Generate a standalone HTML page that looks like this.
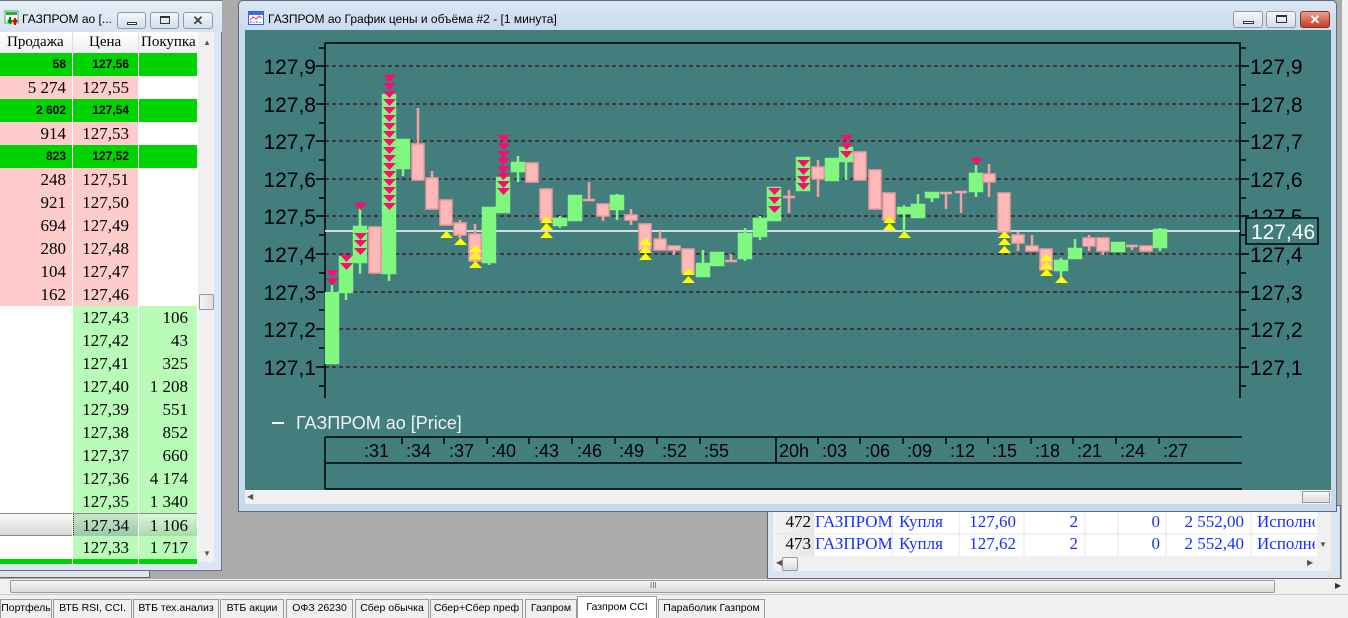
<!DOCTYPE html>
<html><head><meta charset="utf-8">
<style>
*{margin:0;padding:0;box-sizing:border-box}
body{width:1348px;height:618px;overflow:hidden;background:#ababab;position:relative;font-family:"Liberation Sans",sans-serif}
.a{position:absolute}
.btn{position:absolute;height:17px;border:1px solid #8d99a8;border-radius:3px;background:linear-gradient(#f4f7fb,#d5dde8)}
.ob{position:absolute;left:0;top:0;width:222px;height:571px;background:#dbe6f2;border:1px solid #6a7380;border-left:none}
.row{position:absolute;left:0;width:197px;height:23px;font-family:"Liberation Serif",serif;font-size:17px;line-height:23px}
.row div{position:absolute;top:0;height:23px;text-align:right;line-height:23px}
.c1{left:0;width:72px;padding-right:6px}
.c2{left:73px;width:65px;padding-right:9px}
.c3{left:139px;width:58px;padding-right:9px}
.row .gb{background:#00d400;font-family:"Liberation Sans",sans-serif;font-weight:bold;font-size:12px;line-height:23px}
.pk{background:#ffcccc}
.lg{background:#b8fcb8}
.tab{position:absolute;top:599px;height:19px;border:1px solid #9a9a9a;border-bottom:none;background:#f0f0f0;font-size:10.5px;line-height:17px;text-align:center;color:#000;white-space:nowrap;overflow:hidden}
.t{position:absolute;font-family:"Liberation Serif",serif;font-size:17px;color:#1530ff;line-height:22px}
</style></head><body>

<div class="ob">
 <div class="a" style="left:0;top:0;width:222px;height:31px;background:linear-gradient(#e6eef7,#d6e2ef)"></div>
 <svg class="a" style="left:4px;top:9px" width="16" height="16"><rect x="1" y="1" width="13" height="12" fill="#fff" stroke="#4a7"/><rect x="2" y="2" width="11" height="3" fill="#3a3"/><path d="M6 7v6M4 10l2 3 2-3" stroke="#080" stroke-width="2" fill="none"/><path d="M11 15V9M9 12l2-3 2 3" stroke="#e00" stroke-width="2" fill="none"/></svg>
 <div class="a" style="left:22px;top:11px;font-size:12px;color:#000">ГАЗПРОМ ао [...</div>
 <div class="btn" style="left:117px;top:11px;width:29px"><div class="a" style="left:9px;top:9px;width:10px;height:3px;border:1px solid #333;background:#fff"></div></div>
 <div class="btn" style="left:150px;top:11px;width:29px"><div class="a" style="left:9px;top:3px;width:10px;height:8px;border:1px solid #333;border-top-width:2px"></div></div>
 <div class="btn" style="left:183px;top:11px;width:30px;text-align:center;font-size:13px;line-height:15px;color:#444;font-weight:bold">✕</div>
 <div class="a" style="left:0;top:31px;width:214px;height:530px;background:#fff"></div>
 <div class="a" style="left:0;top:31px;width:197px;height:21px;background:linear-gradient(#fff,#eef0f3);font-family:'Liberation Serif',serif;font-size:15px;line-height:21px">
  <span class="a" style="left:7px">Продажа</span><span class="a" style="left:89px">Цена</span><span class="a" style="left:141px">Покупка</span>
  <div class="a" style="left:72px;top:0;width:1px;height:21px;background:#dde"></div><div class="a" style="left:138px;top:0;width:1px;height:21px;background:#dde"></div>
 </div>
 <div class="a" style="left:198px;top:31px;width:16px;height:530px;background:#f0f0f0"></div>
 <div class="a" style="left:203px;top:37px;font-size:8px;color:#555">▲</div>
 <div class="a" style="left:199px;top:293px;width:15px;height:16px;border:1px solid #999;border-radius:2px;background:linear-gradient(90deg,#f4f4f4,#ddd)"></div>
 <div class="a" style="left:203px;top:548px;font-size:8px;color:#555">▼</div>

 <div class="row" style="top:52px"><div class="c1 gb">58</div><div class="c2 gb">127,56</div><div class="c3 gb"></div></div>
 <div class="row" style="top:75px"><div class="c1 pk">5 274</div><div class="c2 pk">127,55</div></div>
 <div class="row" style="top:98px"><div class="c1 gb">2 602</div><div class="c2 gb">127,54</div><div class="c3 gb"></div></div>
 <div class="row" style="top:121px"><div class="c1 pk">914</div><div class="c2 pk">127,53</div></div>
 <div class="row" style="top:144px"><div class="c1 gb">823</div><div class="c2 gb">127,52</div><div class="c3 gb"></div></div>
 <div class="row" style="top:167px"><div class="c1 pk">248</div><div class="c2 pk">127,51</div></div>
 <div class="row" style="top:190px"><div class="c1 pk">921</div><div class="c2 pk">127,50</div></div>
 <div class="row" style="top:213px"><div class="c1 pk">694</div><div class="c2 pk">127,49</div></div>
 <div class="row" style="top:236px"><div class="c1 pk">280</div><div class="c2 pk">127,48</div></div>
 <div class="row" style="top:259px"><div class="c1 pk">104</div><div class="c2 pk">127,47</div></div>
 <div class="row" style="top:282px"><div class="c1 pk">162</div><div class="c2 pk">127,46</div></div>
 <div class="row" style="top:305px"><div class="c2 lg">127,43</div><div class="c3 lg">106</div></div>
 <div class="row" style="top:328px"><div class="c2 lg">127,42</div><div class="c3 lg">43</div></div>
 <div class="row" style="top:351px"><div class="c2 lg">127,41</div><div class="c3 lg">325</div></div>
 <div class="row" style="top:374px"><div class="c2 lg">127,40</div><div class="c3 lg">1 208</div></div>
 <div class="row" style="top:397px"><div class="c2 lg">127,39</div><div class="c3 lg">551</div></div>
 <div class="row" style="top:420px"><div class="c2 lg">127,38</div><div class="c3 lg">852</div></div>
 <div class="row" style="top:443px"><div class="c2 lg">127,37</div><div class="c3 lg">660</div></div>
 <div class="row" style="top:466px"><div class="c2 lg">127,36</div><div class="c3 lg">4 174</div></div>
 <div class="row" style="top:489px"><div class="c2 lg">127,35</div><div class="c3 lg">1 340</div></div>
 <div class="row" style="top:512px;border-top:1px solid #888;border-bottom:1px solid #888;background:linear-gradient(#fafafa,#d8d8d8)"><div class="c2" style="background:linear-gradient(#c8e8c8,#98c8a8);border-left:1px dotted #333">127,34</div><div class="c3" style="background:linear-gradient(#d8f8d8,#a8d8a8)">1 106</div></div>
 <div class="row" style="top:535px"><div class="c2 lg">127,33</div><div class="c3 lg">1 717</div></div>
 <div class="a" style="left:0;top:558px;width:197px;height:5px;background:#00d400"></div>
 <div class="a" style="left:72px;top:52px;width:1px;height:511px;background:#fff"></div>
 <div class="a" style="left:138px;top:52px;width:1px;height:511px;background:#fff"></div>
</div>
<div class="a" style="left:0;top:571px;width:150px;height:7px;background:#dde4ec;border-right:1px solid #666;border-bottom:1px solid #666"></div>

<div class="a" style="left:767px;top:505px;width:574px;height:74px;background:#d9e5f2;border:1px solid #666"></div>
<div class="a" style="left:773px;top:512px;width:544px;height:44px;background:#fff"></div>
<div class="a" style="left:773px;top:512px;width:41px;height:44px;background:linear-gradient(90deg,#f4f4f4,#e6e6e6)"></div>
<div class="a" style="left:1317px;top:512px;width:14px;height:59px;background:#f0f0f0"></div>
<div class="a" style="left:773px;top:556px;width:544px;height:15px;background:#f0f0f0"></div>
<div class="a" style="left:782px;top:557px;width:16px;height:14px;border:1px solid #999;border-radius:2px;background:linear-gradient(#f8f8f8,#ddd)"></div>
<div class="a" style="left:1319px;top:540px;font-size:8px;color:#555">▼</div>
<div class="a" style="left:776px;top:558px;font-size:8px;color:#555">◀</div>
<div class="a" style="left:1307px;top:558px;font-size:8px;color:#555">▶</div>
<svg class="a" style="left:773px;top:512px" width="544" height="44"><g stroke="#e4e4e4"><path d="M41 0v44M119 0v44M186 0v44M251 0v44M312 0v44M345 0v44M393 0v44M478 0v44M0 22h544"/></g></svg>
<div class="t" style="left:773px;top:511px;width:38px;text-align:right;color:#000">472</div>
<div class="t" style="left:773px;top:533px;width:38px;text-align:right;color:#000">473</div>
<div class="t" style="left:815px;top:511px">ГАЗПРОМ</div><div class="t" style="left:815px;top:533px">ГАЗПРОМ</div>
<div class="t" style="left:899px;top:511px">Купля</div><div class="t" style="left:899px;top:533px">Купля</div>
<div class="t" style="left:960px;top:511px;width:56px;text-align:right">127,60</div><div class="t" style="left:960px;top:533px;width:56px;text-align:right">127,62</div>
<div class="t" style="left:1060px;top:511px;width:18px;text-align:right">2</div><div class="t" style="left:1060px;top:533px;width:18px;text-align:right">2</div>
<div class="t" style="left:1140px;top:511px;width:20px;text-align:right">0</div><div class="t" style="left:1140px;top:533px;width:20px;text-align:right">0</div>
<div class="t" style="left:1166px;top:511px;width:78px;text-align:right">2 552,00</div><div class="t" style="left:1166px;top:533px;width:78px;text-align:right">2 552,40</div>
<div class="t" style="left:1257px;top:511px;width:58px;overflow:hidden;white-space:nowrap">Исполнено</div><div class="t" style="left:1257px;top:533px;width:58px;overflow:hidden;white-space:nowrap">Исполнено</div>
<div class="a" style="left:1341px;top:0;width:7px;height:579px;background:#f0f0f0;border-left:1px solid #aaa"></div>

<div class="a" style="left:238px;top:0;width:1099px;height:512px;background:#c7daee;border:1px solid #5a6a7c;border-radius:5px 5px 0 0"></div>
<div class="a" style="left:239px;top:1px;width:1097px;height:29px;background:linear-gradient(#dbe7f4,#c9dbee);border-radius:5px 5px 0 0"></div>
<svg class="a" style="left:248px;top:11px" width="16" height="14"><rect x=".5" y=".5" width="15" height="13" fill="#fff" stroke="#3366cc"/><rect x="1" y="1" width="14" height="3" fill="#3a6fd8"/><path d="M2 9l3-3 3 2 3-3 3 2" stroke="#e33" fill="none"/><path d="M3 12v-2M6 12v-1M9 12v-2M12 12v-1" stroke="#36c"/></svg>
<div class="a" style="left:268px;top:12px;font-size:12px;color:#000">ГАЗПРОМ ао График цены и объёма #2 - [1 минута]</div>
<div class="btn" style="left:1233px;top:11px;width:30px"><div class="a" style="left:9px;top:9px;width:11px;height:3px;border:1px solid #333;background:#fff"></div></div>
<div class="btn" style="left:1266px;top:11px;width:30px"><div class="a" style="left:9px;top:3px;width:11px;height:8px;border:1px solid #333;border-top-width:2px"></div></div>
<div class="btn" style="left:1300px;top:11px;width:30px;background:linear-gradient(#e8a090,#c43c28);border-color:#8a3020;text-align:center;color:#fff;font-weight:bold;font-size:13px;line-height:15px">✕</div>
<div class="a" style="left:245px;top:30px;width:1086px;height:460px;background:#427e7e"></div>
<div class="a" style="left:245px;top:490px;width:1086px;height:14px;background:#f0f0f0"></div>
<div class="a" style="left:247px;top:492px;font-size:8px;color:#555">◀</div>
<div class="a" style="left:1302px;top:491px;width:28px;height:12px;border:1px solid #999;background:linear-gradient(#f6f6f6,#ddd)"></div>

<svg class="a" style="left:0;top:0" width="1348" height="618" font-family="Liberation Sans, sans-serif">
 <g stroke="#4a0808" stroke-width="1.3" stroke-dasharray="4 3">
  <path d="M325 66H1240M325 104H1240M325 141H1240M325 179H1240M325 216H1240M325 254H1240M325 292H1240M325 329H1240M325 367H1240"/>
 </g>
 <g stroke="#000" stroke-width="1.5" fill="none">
  <path d="M325 43H1240V398M325 43V398M316 66h9M316 104h9M316 141h9M316 179h9M316 216h9M316 254h9M316 292h9M316 329h9M316 367h9M319 48h6M319 85h6M319 123h6M319 160h6M319 198h6M319 235h6M319 273h6M319 310h6M319 348h6M319 386h6M1240 66h9M1240 104h9M1240 141h9M1240 179h9M1240 216h9M1240 254h9M1240 292h9M1240 329h9M1240 367h9M1240 48h6M1240 85h6M1240 123h6M1240 160h6M1240 198h6M1240 235h6M1240 273h6M1240 310h6M1240 348h6M1240 386h6"/>
  <path d="M325 437H1242M325 463H1242M325 489H1242M325 437V489M776 437V463"/>
  <path d="M402 437v7M444 437v7M487 437v7M529 437v7M572 437v7M615 437v7M657 437v7M700 437v7M818 437v7M860 437v7M903 437v7M946 437v7M988 437v7M1031 437v7M1073 437v7M1116 437v7M1159 437v7"/>
 </g>
 <g font-size="21" fill="#000" text-anchor="end">
  <text x="316" y="74">127,9</text><text x="316" y="112">127,8</text><text x="316" y="149">127,7</text><text x="316" y="187">127,6</text><text x="316" y="224">127,5</text><text x="316" y="262">127,4</text><text x="316" y="300">127,3</text><text x="316" y="337">127,2</text><text x="316" y="375">127,1</text>
 </g>
 <g font-size="21" fill="#000">
  <text x="1250" y="74">127,9</text><text x="1250" y="112">127,8</text><text x="1250" y="149">127,7</text><text x="1250" y="187">127,6</text><text x="1250" y="224">127,5</text><text x="1250" y="262">127,4</text><text x="1250" y="300">127,3</text><text x="1250" y="337">127,2</text><text x="1250" y="375">127,1</text>
 </g>
 <line x1="325" y1="231" x2="1240" y2="231" stroke="#fff" stroke-width="1.5"/>
 <rect x="1246" y="218" width="72" height="26" fill="#427e7e" stroke="#000" stroke-width="1.5"/>
 <text x="1251" y="239" font-size="21" fill="#fff">127,46</text>

 <g stroke="#80f880" stroke-width="2.5" fill="#80f880">
  <path d="M332 285V363M346 255V300M360 203V274M389 95V281M403 140V176M489 208V265M503 178V212M518 156V182M560 216V228M575 196V220M617 194V220M703 250V276M717 253V265M745 228V261M760 216V240M774 188V220M803 158V190M832 159V180M846 148V180M904 205V237M918 194V217M932 193V202M976 165V197M1061 258V280M1075 239V258M1118 243V251M1160 228V251" fill="none"/>
  <rect x="326" y="293" width="12" height="70"/><rect x="340" y="257" width="12" height="35"/><rect x="354" y="227" width="12" height="35"/><rect x="383" y="95" width="12" height="178"/><rect x="397" y="140" width="12" height="28"/><rect x="483" y="208" width="12" height="54"/><rect x="497" y="178" width="12" height="34"/><rect x="512" y="163" width="12" height="8"/><rect x="554" y="219" width="12" height="6"/><rect x="569" y="196" width="12" height="24"/><rect x="611" y="196" width="12" height="13"/><rect x="697" y="264" width="12" height="12"/><rect x="711" y="253" width="12" height="12"/><rect x="739" y="234" width="12" height="24"/><rect x="754" y="219" width="12" height="17"/><rect x="768" y="188" width="12" height="32"/><rect x="797" y="158" width="12" height="32"/><rect x="826" y="159" width="12" height="21"/><rect x="840" y="148" width="12" height="13"/><rect x="898" y="208" width="12" height="5"/><rect x="912" y="205" width="12" height="12"/><rect x="926" y="193" width="12" height="4"/><rect x="970" y="174" width="12" height="17"/><rect x="1055" y="261" width="12" height="9"/><rect x="1069" y="249" width="12" height="9"/><rect x="1112" y="243" width="12" height="8"/><rect x="1154" y="230" width="12" height="17"/>
 </g>
 <g stroke="#f2a0a0" stroke-width="2.5" fill="none">
  <path d="M418 108V180M432 171V209M460 220V238M475 224V265M589 182V200M603 204V221M631 209V225M660 231V250M674 246V255M731 254V261M789 190V213M818 160V197M946 193V209M961 191V213M989 164V197M1018 232V251M1032 235V251M1089 235V251M1103 238V255M1132 246V250"/>
  <path d="M583 200h12M725 261h12M783 197h12M940 193h12M955 192h12M1126 246h12"/>
 </g>
 <g fill="#ffb8b8" stroke="#f29a9a" stroke-width="1.5">
  <rect x="369" y="227" width="12" height="46"/><rect x="412" y="144" width="12" height="36"/><rect x="426" y="178" width="12" height="31"/><rect x="440" y="200" width="12" height="25"/><rect x="454" y="223" width="12" height="12"/><rect x="469" y="234" width="12" height="27"/><rect x="526" y="163" width="12" height="19"/><rect x="540" y="189" width="12" height="31"/><rect x="597" y="204" width="12" height="12"/><rect x="625" y="215" width="12" height="5"/><rect x="639" y="224" width="12" height="26"/><rect x="654" y="239" width="12" height="11"/><rect x="668" y="246" width="12" height="4"/><rect x="682" y="249" width="12" height="24"/><rect x="812" y="167" width="12" height="12"/><rect x="854" y="152" width="12" height="28"/><rect x="869" y="170" width="12" height="39"/><rect x="883" y="193" width="12" height="27"/><rect x="983" y="174" width="12" height="8"/><rect x="998" y="193" width="12" height="39"/><rect x="1012" y="235" width="12" height="8"/><rect x="1026" y="246" width="12" height="5"/><rect x="1040" y="249" width="12" height="21"/><rect x="1083" y="238" width="12" height="8"/><rect x="1097" y="238" width="12" height="13"/><rect x="1140" y="246" width="12" height="5"/>
 </g>
 <g fill="#ff0a6e">
  <path d="M326 270h13l-6.5 7zM326 278h13l-6.5 7zM340 255h13l-6.5 7zM340 263h13l-6.5 7zM354 203h13l-6.5 7zM354 233h13l-6.5 7zM354 240h13l-6.5 7zM354 248h13l-6.5 7z"/>
  <path d="M383 75h13l-6.5 7zM383 83h13l-6.5 7zM383 91h13l-6.5 7zM383 99h13l-6.5 7zM383 107h13l-6.5 7zM383 115h13l-6.5 7zM383 123h13l-6.5 7zM383 131h13l-6.5 7zM383 139h13l-6.5 7zM383 147h13l-6.5 7zM383 155h13l-6.5 7zM383 163h13l-6.5 7zM383 171h13l-6.5 7zM383 179h13l-6.5 7zM383 187h13l-6.5 7zM383 195h13l-6.5 7zM383 203h13l-6.5 7z"/>
  <path d="M497 135h13l-6.5 7zM497 143h13l-6.5 7zM497 151h13l-6.5 7zM497 158h13l-6.5 7zM497 166h13l-6.5 7zM497 173h13l-6.5 7zM497 181h13l-6.5 7zM497 188h13l-6.5 7z"/>
  <path d="M768 188h13l-6.5 7zM768 197h13l-6.5 7zM768 206h13l-6.5 7zM797 160h13l-6.5 7zM797 168h13l-6.5 7zM797 176h13l-6.5 7zM797 183h13l-6.5 7zM840 135h13l-6.5 7zM840 143h13l-6.5 7zM840 151h13l-6.5 7zM970 158h13l-6.5 7z"/>
 </g>
 <g fill="#ffff00">
  <path d="M440 238h13l-6.5-7zM454 245h13l-6.5-7zM469 252h13l-6.5-7zM469 259h13l-6.5-7zM469 268h13l-6.5-7zM540 223h13l-6.5-7zM540 230h13l-6.5-7zM540 238h13l-6.5-7zM639 245h13l-6.5-7zM639 253h13l-6.5-7zM639 260h13l-6.5-7zM682 275h13l-6.5-7zM682 283h13l-6.5-7zM883 223h13l-6.5-7zM883 230h13l-6.5-7zM898 238h13l-6.5-7zM998 238h13l-6.5-7zM998 245h13l-6.5-7zM998 253h13l-6.5-7zM1040 261h13l-6.5-7zM1040 269h13l-6.5-7zM1040 276h13l-6.5-7zM1055 283h13l-6.5-7z"/>
 </g>
 <path d="M272 423h12" stroke="#fff" stroke-width="2"/>
 <text x="296" y="429" font-size="18" fill="#f2f2f2">ГАЗПРОМ ао [Price]</text>
 <g font-size="18" fill="#000">
  <text x="364" y="457">:31</text><text x="406" y="457">:34</text><text x="449" y="457">:37</text><text x="491" y="457">:40</text><text x="534" y="457">:43</text><text x="577" y="457">:46</text><text x="619" y="457">:49</text><text x="662" y="457">:52</text><text x="704" y="457">:55</text>
  <text x="779" y="457">20h</text><text x="822" y="457">:03</text><text x="865" y="457">:06</text><text x="907" y="457">:09</text><text x="950" y="457">:12</text><text x="992" y="457">:15</text><text x="1035" y="457">:18</text><text x="1077" y="457">:21</text><text x="1120" y="457">:24</text><text x="1163" y="457">:27</text>
 </g>
</svg>

<div class="a" style="left:0;top:579px;width:1348px;height:15px;background:#f0f0f0"></div>
<div class="a" style="left:10px;top:580px;width:1265px;height:13px;border:1px solid #9a9a9a;border-radius:2px;background:linear-gradient(#f6f6f6,#d8d8d8)"></div>
<div class="a" style="left:650px;top:581px;font-size:8px;color:#666">III</div>
<div class="a" style="left:1335px;top:581px;font-size:8px;color:#333">▶</div>
<div class="a" style="left:0;top:594px;width:1348px;height:24px;background:#f0f0f0;border-top:1px solid #ccc"></div>
<div class="tab" style="left:0;width:52px">Портфель</div>
<div class="tab" style="left:53px;width:79px">ВТБ RSI, CCI.</div>
<div class="tab" style="left:133px;width:86px">ВТБ тех.анализ</div>
<div class="tab" style="left:220px;width:64px">ВТБ акции</div>
<div class="tab" style="left:286px;width:67px">ОФЗ 26230</div>
<div class="tab" style="left:355px;width:74px">Сбер обычка</div>
<div class="tab" style="left:430px;width:93px">Сбер+Сбер преф</div>
<div class="tab" style="left:525px;width:52px">Газпром</div>
<div class="tab" style="left:577px;top:596px;height:22px;width:80px;background:#fff;line-height:20px">Газпром CCI</div>
<div class="tab" style="left:658px;width:107px">Параболик Газпром</div>
</body></html>
